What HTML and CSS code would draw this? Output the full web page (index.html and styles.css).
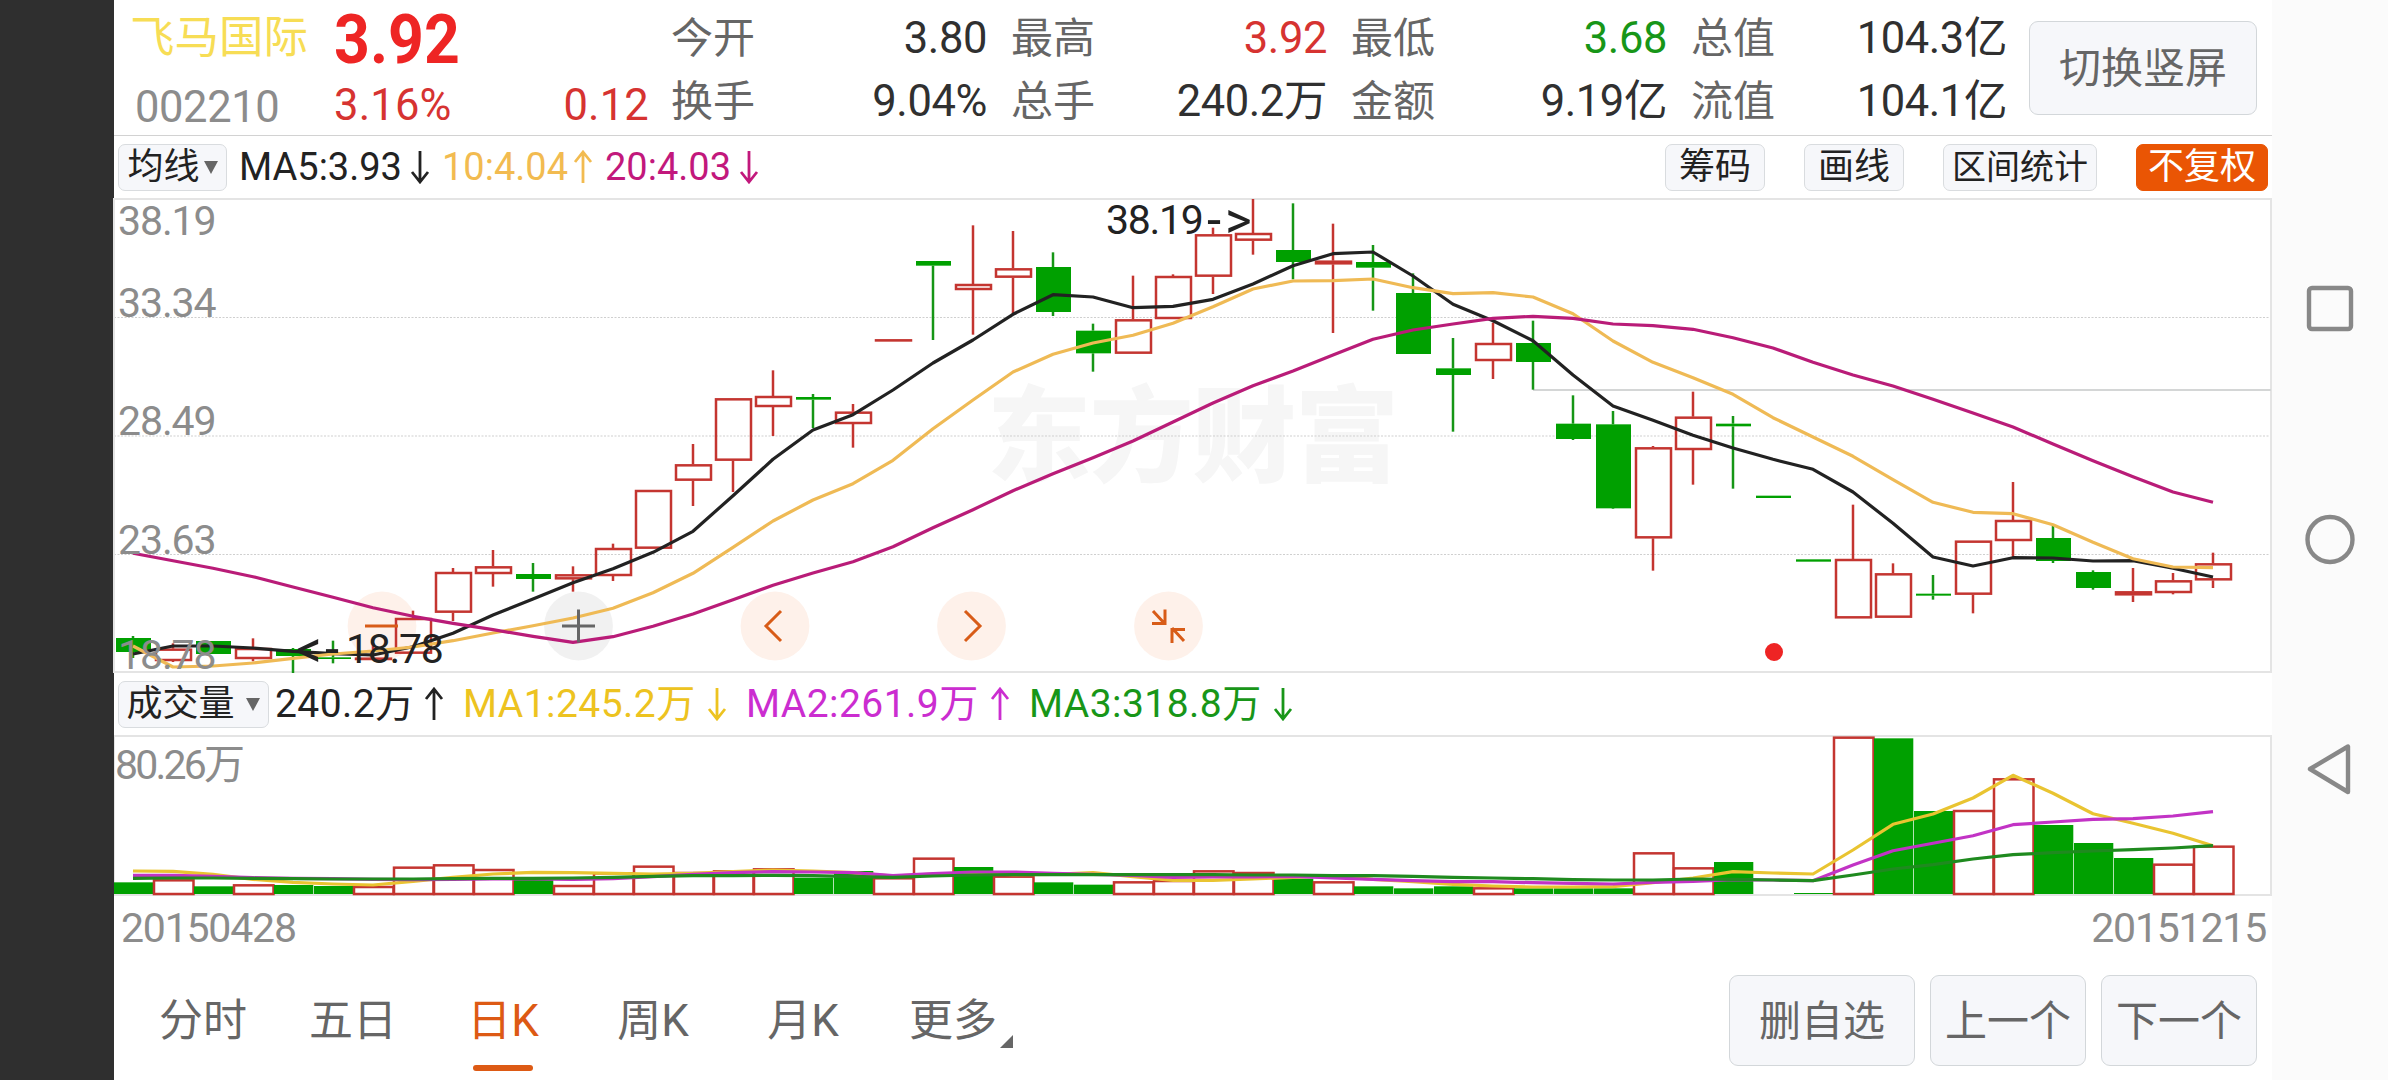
FILE: index.html
```
<!DOCTYPE html>
<html lang="zh-CN">
<head>
<meta charset="UTF-8">
<meta name="viewport" content="width=device-width, initial-scale=1.0">
<title>飞马国际 002210</title>
<link rel="stylesheet" href="styles.css">
</head>
<body>
<div class="screen">
    <div class="notch"></div>

    <main class="app">
        <header class="quote">
            <div class="stock">
                <span class="name">飞马国际</span>
                <span class="price"><b>3.92</b></span>
                <span class="code">002210</span>
                <span class="change"><span>3.16%</span><span>0.12</span></span>
            </div>
            <dl class="stats">
                <div><dt>今开</dt><dd>3.80</dd></div>
                <div><dt>最高</dt><dd class="up">3.92</dd></div>
                <div><dt>最低</dt><dd class="down">3.68</dd></div>
                <div><dt>总值</dt><dd>104.3亿</dd></div>
                <div><dt>换手</dt><dd>9.04%</dd></div>
                <div><dt>总手</dt><dd>240.2万</dd></div>
                <div><dt>金额</dt><dd>9.19亿</dd></div>
                <div><dt>流值</dt><dd>104.1亿</dd></div>
            </dl>
            <button class="btn rotate">切换竖屏</button>
        </header>

        <div class="bar ma-bar">
            <button class="chip ma-pick">均线<i class="caret"></i></button>
            <span class="ind ma5">MA5:3.93<svg class="arrow" viewBox="0 0 20 34"><path d="M10 1v31M2 22l8 10 8-10"/></svg></span>
            <span class="ind ma10">10:4.04<svg class="arrow" viewBox="0 0 20 34"><path d="M10 33V2M2 12l8-10 8 10"/></svg></span>
            <span class="ind ma20">20:4.03<svg class="arrow" viewBox="0 0 20 34"><path d="M10 1v31M2 22l8 10 8-10"/></svg></span>
            <div class="tools">
                <button class="chip">筹码</button>
                <button class="chip">画线</button>
                <button class="chip range">区间统计</button>
                <button class="chip active">不复权</button>
            </div>
        </div>

        <svg id="kline" class="kline" viewBox="0 0 2158 475"></svg>

        <div class="bar vol-bar">
            <button class="chip vol-pick">成交量<i class="caret"></i></button>
            <span class="ind vol">240.2万<svg class="arrow" viewBox="0 0 20 34"><path d="M10 33V2M2 12l8-10 8 10"/></svg></span>
            <span class="ind vma1">MA1:245.2万<svg class="arrow" viewBox="0 0 20 34"><path d="M10 1v31M2 22l8 10 8-10"/></svg></span>
            <span class="ind vma2">MA2:261.9万<svg class="arrow" viewBox="0 0 20 34"><path d="M10 33V2M2 12l8-10 8 10"/></svg></span>
            <span class="ind vma3">MA3:318.8万<svg class="arrow" viewBox="0 0 20 34"><path d="M10 1v31M2 22l8 10 8-10"/></svg></span>
        </div>

        <svg id="volume" class="volume" viewBox="0 0 2158 161"></svg>

        <div class="dates"><span>20150428</span><span>20151215</span></div>

        <footer class="footer">
            <nav class="tabs">
                <a class="tab">分时</a>
                <a class="tab">五日</a>
                <a class="tab current">日K</a>
                <a class="tab">周K</a>
                <a class="tab">月K</a>
                <a class="tab more">更多</a>
            </nav>
            <div class="actions">
                <button class="btn wide">删自选</button>
                <button class="btn">上一个</button>
                <button class="btn">下一个</button>
            </div>
        </footer>
    </main>

    <aside class="sysnav">
        <svg viewBox="0 0 116 1080">
            <rect x="37" y="288" width="42" height="41" rx="3"/>
            <circle cx="58" cy="539.500" r="22.500"/>
            <path d="M76 746.500v45.500L38 769z"/>
        </svg>
    </aside>
</div>
<script src="chart.js"></script>
</body>
</html>
```
FILE: styles.css
```
:root{
    --red:#c43530;
    --green:#00a000;
    --orange:#ea5504;
    --text:#303030;
    --label:#666;
    --muted:#8c8c8c;
    --line:#e4e4e4;
}
*{box-sizing:border-box}
body{
    margin:0;
    background:#fff;
    color:var(--text);
    font-family:Roboto,"Noto Sans CJK SC",sans-serif;
}
button{font-family:inherit;padding:0;margin:0}

.screen{display:grid;grid-template-columns:114px 2158px 116px;height:1080px;overflow:hidden}
.notch{background:#2f2f2f}
.app{display:flex;flex-direction:column;background:#fff}
.sysnav{background:#fbfbfb}
.sysnav svg{display:block;width:116px;height:1080px;fill:none;stroke:#888;stroke-width:4.4;stroke-linejoin:round}

/* ── Quote header ── */
.quote{
    display:flex;
    height:136px;
    padding-top:7px;
    border-bottom:1px solid #d2d2d2;
    font-size:43.500px;
    line-height:63px;
    letter-spacing:-.4px;
}
.stock{
    display:grid;
    grid-template-columns:204px 315px;
    grid-template-rows:63px 63px;
    width:541px;
    padding-left:16px;
}
.name{color:#f7dd55;font-size:44.500px;letter-spacing:0}
.price{color:#ee2524}
.price b{display:inline-block;font-size:68px;letter-spacing:0;transform:scaleX(.92);transform-origin:left;line-height:67px}
.code{color:var(--muted);padding:6px 0 0 5px;letter-spacing:-.4px}
.change{display:flex;justify-content:space-between;color:#d63331;padding-top:4px;letter-spacing:.2px}
.stats{
    display:grid;
    grid-template-columns:repeat(4,316px);
    grid-template-rows:63px 63px;
    column-gap:24px;
    margin:0 0 0 16px;
}
.stats div{display:flex;justify-content:space-between}
.stats dt{color:var(--label);font-size:42px;letter-spacing:0}
.stats dd{margin:0}
.stats .up{color:#d63331}
.stats .down{color:#189618}

.btn{
    width:156px;
    height:91px;
    padding-bottom:7px;
    border:1px solid #d3d7da;
    border-radius:9px;
    background:#f6f7fa;
    color:var(--label);
    font-size:42px;
}
.rotate{width:228px;height:94px;margin:14px 0 0 22px}

/* ── Indicator bars ── */
.bar{display:flex;align-items:center;height:62px;padding:0 4px;font-size:38px;line-height:46px}
.chip{
    display:flex;
    align-items:center;
    justify-content:center;
    width:100px;
    height:47px;
    border:1px solid #d9dcdf;
    border-radius:7px;
    background:#f6f7fa;
    color:#222;
    font-size:36px;
    line-height:44px;
}
.caret{border:7.500px solid transparent;border-top:13px solid #666;border-bottom:0}
.ind{display:flex;align-items:center;justify-content:space-between;letter-spacing:0;white-space:nowrap}
.arrow{width:20px;height:34px;fill:none;stroke:currentColor;stroke-width:2.800}
.ma-pick{width:109px}
.ma-pick .caret{margin-left:4px}
.ma5{width:191px;margin-left:12px;color:#222}
.ma10{width:151px;margin-left:12px;color:#f2bb50}
.ma20{width:154px;margin-left:12px;color:#c2187c}
.tools{display:flex;gap:39px;margin-left:auto}
.range{width:154px;font-size:34px}
.active{width:132px;background:var(--orange);border-color:var(--orange);color:#fff}

.vol-pick{width:151px}
.vol-pick .caret{margin-left:11px;margin-right:1px}
.vol-bar .ind{font-size:39px;letter-spacing:.45px}
.vol{width:169px;margin-left:6px;color:#222}
.vma1,.vma2,.vma3{width:264px;margin-left:19px}
.vma1{color:#edc320}
.vma2{color:#cb2dd0}
.vma3{color:#189618}

/* ── Charts ── */
.kline{display:block;width:2158px;height:475px;flex:none;overflow:visible}
.volume{display:block;width:2158px;height:161px;flex:none}
.frame{fill:none;stroke:var(--line);stroke-width:2}
.grid{stroke:#cfcfcf;stroke-width:1;stroke-dasharray:2 1.500}
.level{stroke:#d4d6d6;stroke-width:2}
.rise{fill:none;stroke:var(--red);stroke-width:2.500}
.fall{fill:var(--green);stroke:none}
.wick-rise{stroke:var(--red);stroke-width:2.500}
.wick-fall{stroke:#169616;stroke-width:2.500}
.avg{fill:none;stroke-width:3.200;stroke-linejoin:round}
.axis{fill:var(--muted);font-size:41px;letter-spacing:-1.100px}
.mark{fill:#222;font-size:41px;letter-spacing:-1.300px}
.pointer{font-size:51px}
.watermark{fill:#f6f6f6;font-family:"Noto Sans CJK SC",sans-serif;font-size:104px;font-weight:900}
.knob{fill:#fef1ea}
.knob.off{fill:#f1f1f1}
.knob-icon{fill:none;stroke:#d85c18;stroke-width:3}
.knob-icon.off{stroke:#666}
.dot{fill:#ee2424}

.dates{
    display:flex;
    justify-content:space-between;
    height:64px;
    padding:8px 6px 0 7px;
    color:var(--muted);
    font-size:41px;
    line-height:48px;
    letter-spacing:-1.200px;
}

/* ── Period tabs and actions ── */
.footer{display:flex;justify-content:space-between;height:120px;padding:15px 15px 0 14px}
.tabs{display:flex}
.tab{
    position:relative;
    width:150px;
    color:var(--label);
    font-size:44px;
    line-height:93px;
    text-align:center;
}
.current{color:#dd5a14}
.current::after{
    content:"";
    position:absolute;
    left:45px;
    top:90px;
    width:60px;
    height:6px;
    border-radius:3px;
    background:#dd5a14;
}
.more::after{
    content:"";
    position:absolute;
    left:122px;
    top:60px;
    border-left:13px solid transparent;
    border-bottom:13px solid #666;
}
.actions{display:flex;gap:15px}
.wide{width:186px}
```
FILE: chart.js
```
(() => {
    const STEP = 40, FIRST = 19;
    const cx = i => FIRST + i * STEP;

    /* [rise?, body top, body bottom, high, low], three units per pixel */
    const candles = [
        [0,1344,1386,1338,1404],[1,1376,1413,1360,1416],[0,1353,1392,1353,1392],[1,1374,1407,1345,1414],
        [0,1377,1398,1374,1449],[0,1402,1407,1352,1420],[1,1403,1410,1360,1410],[1,1284,1391,1262,1391],
        [1,1146,1268,1134,1293],[1,1129,1152,1080,1190],[0,1152,1167,1119,1205],[1,1153,1168,1129,1205],
        [1,1074,1158,1061,1173],[1,900,1076,900,1076],[1,823,872,762,948],[1,625,812,625,906],
        [1,618,651,541,738],[0,621,629,612,714],[1,665,702,642,773],[1,448,454,448,454],
        [0,213,227,213,450],[1,282,300,106,434],[1,235,263,123,372],[0,231,366,187,378],
        [0,422,490,401,545],[1,388,491,257,491],[1,258,387,253,387],[1,133,260,113,312],
        [1,129,152,27,194],[0,180,216,40,268],[1,212,223,101,429],[0,216,233,165,362],
        [0,309,492,250,492],[0,535,555,444,725],[1,459,513,398,567],[0,459,516,392,599],
        [0,701,747,616,750],[0,703,955,663,957],[1,772,1045,768,1142],[1,680,780,605,884],
        [0,701,709,678,896],[0,917,924,917,924],[0,1108,1115,1108,1115],[1,1107,1285,944,1285],
        [1,1150,1283,1120,1283],[0,1211,1217,1155,1229],[1,1052,1214,1052,1270],[1,990,1053,876,1103],
        [0,1044,1113,1008,1119],[0,1146,1194,1141,1199],[1,1204,1216,1134,1236],[1,1171,1209,1149,1213],
        [1,1120,1171,1088,1194]
    ];
    const ma5 = [1392,1368,1368,1374,1384,1391,1395,1370,1330,1275,1227,1178,1136,1087,1024,917,808,720,674,600,519,450,373,314,321,353,349,328,282,227,191,186,258,343,392,452,555,648,691,736,774,808,838,906,1000,1101,1128,1103,1104,1113,1112,1135,1161];
    const ma10 = [1368,1431,1428,1419,1405,1392,1383,1371,1352,1329,1307,1284,1255,1208,1150,1072,993,930,881,811,716,630,546,493,459,436,400,350,297,273,272,267,293,311,308,321,371,453,517,563,613,683,741,799,869,937,967,971,1004,1057,1106,1131,1133];
    const ma20 = [1090,1112,1135,1160,1191,1222,1253,1279,1300,1319,1339,1357,1340,1309,1272,1229,1186,1149,1115,1070,1013,959,902,851,803,753,696,639,587,543,495,448,420,402,385,379,385,402,407,418,443,474,517,555,588,628,669,711,762,812,860,906,937];

    /* volume bar tops */
    const vols = [637,628,649,643,645,648,648,590,583,597,629,645,607,587,606,601,595,623,603,622,563,591,617,637,644,634,630,601,606,626,634,649,655,649,652,655,655,655,547,592,576,672,669,200,205,423,420,325,465,519,564,581,527];
    const vma1 = [603,604,613,628,637,642,645,634,622,612,607,608,610,612,610,605,600,603,608,618,612,610,614,613,608,620,631,631,627,622,617,628,635,643,648,651,651,650,638,624,605,609,612,540,463,432,384,316,370,431,460,490,527];
    const vma2 = [616,616,619,623,625,626,628,629,628,627,627,628,626,620,613,608,605,606,608,617,611,606,606,610,613,616,622,621,621,619,624,628,632,635,635,638,640,642,637,634,629,630,632,585,542,520,497,464,456,448,446,438,425];
    const vma3 = [625,624,624,625,626,627,627,627,626,625,625,624,622,619,617,617,616,617,620,622,618,615,614,614,614,614,614,614,615,615,617,617,619,622,624,626,629,630,630,627,628,630,632,615,597,584,567,554,548,543,539,534,527];
    /* volume bars take the day-on-day direction, which differs from the candle here */
    const flipped = [18, 20, 21, 44, 50];

    const line = (vals, y, color) =>
        `<polyline class="avg" stroke="${color}" points="${vals.map((v,i)=>`${cx(i)},${y(v).toFixed(1)}`).join(' ')}"/>`;

    /* ── price pane ── */
    const y = v => v / 3 - 8;
    const candle = ([up, top, bot, hi, lo], i) => {
        const x = cx(i), t = y(top), b = y(bot);
        const cls = up ? 'rise' : 'fall';
        let wick = '';
        if (hi < top) wick += `<line class="wick-${cls}" x1="${x}" x2="${x}" y1="${y(hi)}" y2="${t}"/>`;
        if (lo > bot) wick += `<line class="wick-${cls}" x1="${x}" x2="${x}" y1="${b}" y2="${y(lo)}"/>`;
        const body = up
            ? `<rect class="rise" x="${x-17}" y="${t+1}" width="35" height="${Math.max(b-t-2,.1)}"/>`
            : `<rect class="fall" x="${x-17}" y="${t}" width="35" height="${b-t}"/>`;
        return wick + body;
    };
    const knobs = [268, 464.5, 661, 857.5, 1054.5];
    const icons = ['M251 428h33', 'M448 428h33M464.5 411.5v33',
                   'M667 413l-15 15 15 15', 'M851 413l15 15-15 15',
                   'M1039 413l12 13M1038 425.500h13V411.500M1070 443l-12-13M1071 431.500h-13V445'];

    document.getElementById('kline').innerHTML = `
        <text class="watermark" x="873" y="276" textLength="412">东方财富</text>
        ${[119.5, 238, 356.5].map(v=>`<line class="grid" x1="0" x2="2156" y1="${v}" y2="${v}"/>`).join('')}
        <rect class="frame" x="0" y="1" width="2157" height="473"/>
        ${knobs.map((k,i)=>`<circle class="knob${i===1?' off':''}" cx="${k}" cy="428" r="34.400"/>`).join('')}
        <line class="level" x1="${cx(35)}" x2="2157" y1="192" y2="192"/>
        ${candles.map(candle).join('')}
        ${line(ma5, y, '#222')}${line(ma10, y, '#efba55')}${line(ma20, y, '#b91c78')}
        ${icons.map((d,i)=>`<path class="knob-icon${i===1?' off':''}" d="${d}"/>`).join('')}
        ${[['38.19',37],['33.34',119],['28.49',237],['23.63',356],['18.78',471]].map(([t,v])=>`<text class="axis" x="4" y="${v}">${t}</text>`).join('')}
        <text class="mark" x="992" y="36">38.19<tspan class="pointer" x="1093" y="40">-</tspan><tspan class="pointer" x="1111" y="40">&gt;</tspan></text>
        <text class="mark" x="232" y="465">18.78<tspan class="pointer" x="211" y="469">-</tspan><tspan class="pointer" x="182" y="469">&lt;</tspan></text>
        <circle class="dot" cx="1660" cy="454" r="9"/>`;

    /* ── volume pane ── */
    const vy = v => v / 3 - 65;
    const base = 159;
    const bar = (v, i) => {
        const x = i * STEP, t = vy(v);
        const up = flipped.includes(i) ? !candles[i][0] : candles[i][0];
        return up
            ? `<rect class="rise" x="${x}" y="${t+1}" width="39.500" height="${base-t-1}"/>`
            : `<rect class="fall" x="${x}" y="${t}" width="39.300" height="${base-t}"/>`;
    };
    document.getElementById('volume').innerHTML = `
        <rect class="frame" x="0" y="1" width="2157" height="159"/>
        ${vols.map(bar).join('')}
        ${line(vma1, vy, '#e9c431')}${line(vma2, vy, '#c233c5')}${line(vma3, vy, '#1f8a1f')}
        <text class="axis" x="1" y="44" textLength="129">80.26万</text>`;
})();
```
